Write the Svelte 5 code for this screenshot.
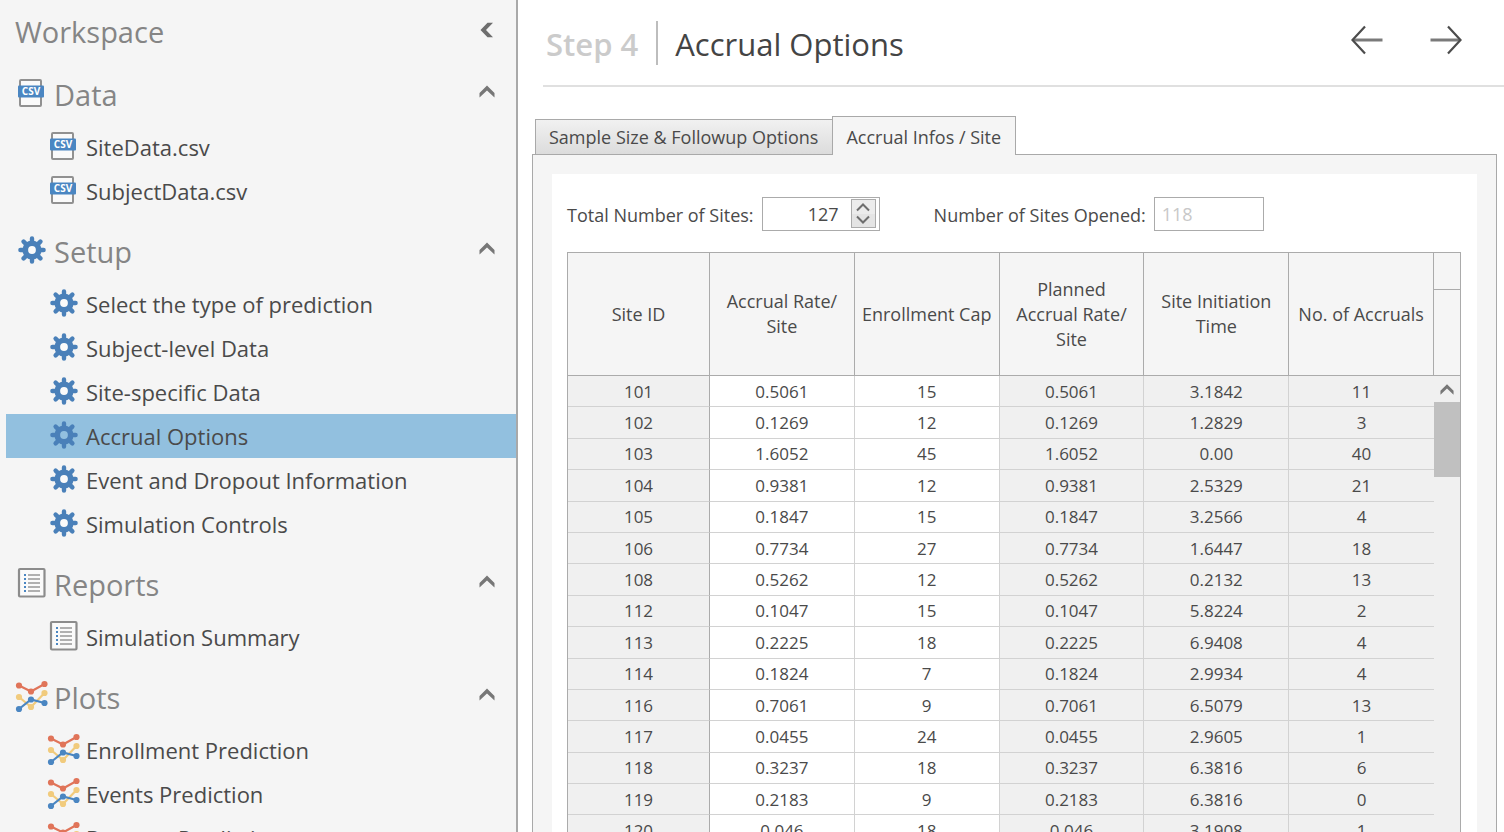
<script>
  const sections = [
    { title: 'Data', icon: 'csv', items: ['SiteData.csv', 'SubjectData.csv'] },
    {
      title: 'Setup',
      icon: 'gear',
      items: [
        'Select the type of prediction',
        'Subject-level Data',
        'Site-specific Data',
        'Accrual Options',
        'Event and Dropout Information',
        'Simulation Controls'
      ]
    },
    { title: 'Reports', icon: 'report', items: ['Simulation Summary'] },
    {
      title: 'Plots',
      icon: 'plot',
      items: ['Enrollment Prediction', 'Events Prediction', 'Dropout Prediction']
    }
  ];

  const columns = [
    'Site ID',
    'Accrual Rate/ Site',
    'Enrollment Cap',
    'Planned Accrual Rate/ Site',
    'Site Initiation Time',
    'No. of Accruals'
  ];

  const rows = [
    ['101', '0.5061', '15', '0.5061', '3.1842', '11'],
    ['102', '0.1269', '12', '0.1269', '1.2829', '3'],
    ['103', '1.6052', '45', '1.6052', '0.00', '40'],
    ['104', '0.9381', '12', '0.9381', '2.5329', '21'],
    ['105', '0.1847', '15', '0.1847', '3.2566', '4'],
    ['106', '0.7734', '27', '0.7734', '1.6447', '18'],
    ['108', '0.5262', '12', '0.5262', '0.2132', '13'],
    ['112', '0.1047', '15', '0.1047', '5.8224', '2'],
    ['113', '0.2225', '18', '0.2225', '6.9408', '4'],
    ['114', '0.1824', '7', '0.1824', '2.9934', '4'],
    ['116', '0.7061', '9', '0.7061', '6.5079', '13'],
    ['117', '0.0455', '24', '0.0455', '2.9605', '1'],
    ['118', '0.3237', '18', '0.3237', '6.3816', '6'],
    ['119', '0.2183', '9', '0.2183', '6.3816', '0'],
    ['120', '0.046', '18', '0.046', '3.1908', '1']
  ];

  let selected = $state('Accrual Options');
  let tab = $state(1);
  let totalSites = $state(127);
</script>

{#snippet icon(name)}
  {#if name === 'csv'}
    <svg class="icon" viewBox="0 0 32 32" aria-hidden="true">
      <rect x="4" y="3" width="21" height="26" rx="1" fill="#fafafa" stroke="#919191" stroke-width="2" />
      <rect x="2" y="8.5" width="26" height="12" rx="1" fill="#4a86c2" />
      <text x="15" y="18" text-anchor="middle" class="csv">CSV</text>
    </svg>
  {:else if name === 'gear'}
    <svg class="icon" viewBox="0 0 32 32" aria-hidden="true">
      <g stroke="#4a80b9" stroke-width="4.4" stroke-linecap="round">
        <path d="M16 4.4V27.6M4.4 16H27.6M7.6 7.6L24.4 24.4M24.4 7.6L7.6 24.4" />
      </g>
      <circle cx="16" cy="16" r="9.6" fill="#4a80b9" />
      <circle class="hole" cx="16" cy="16" r="3.9" />
    </svg>
  {:else if name === 'report'}
    <svg class="icon" viewBox="0 0 32 32" aria-hidden="true">
      <rect x="3" y="2" width="25.5" height="27.5" rx="1" fill="#fafafa" stroke="#8c8c8c" stroke-width="2.2" />
      <path d="M12 8H24M12 12H24M12 16H24M12 20H24M12 24H24" stroke="#b0b0b0" stroke-width="1.8" />
      <path d="M8 8h2M8 12h2M8 16h2M8 20h2M8 24h2" stroke="#4a86c2" stroke-width="2" />
    </svg>
  {:else}
    <svg class="icon" viewBox="0 0 32 32" aria-hidden="true">
      <g fill="none" stroke-width="2.2">
        <path d="M3 17L15 27L28.5 13" stroke="#f1cb7d" />
        <path d="M3 5.5L15 11.5L28.5 4" stroke="#e07459" />
        <path d="M3 29L15 19.5L28.5 23" stroke="#4a86c2" />
      </g>
      <g fill="#f1cb7d"><circle cx="3" cy="17" r="3.1" /><circle cx="15" cy="27" r="3.1" /><circle cx="28.5" cy="13" r="3.1" /></g>
      <g fill="#e07459"><circle cx="3" cy="5.5" r="3.1" /><circle cx="15" cy="11.5" r="3.1" /><circle cx="28.5" cy="4" r="3.1" /></g>
      <g fill="#4a86c2"><circle cx="3" cy="29" r="3.1" /><circle cx="15" cy="19.5" r="3.1" /><circle cx="28.5" cy="23" r="3.1" /></g>
    </svg>
  {/if}
{/snippet}

{#snippet chevronUp()}
  <svg class="chevron" viewBox="0 0 16 16" aria-hidden="true">
    <path d="M.5 10L8 2.5L15.500 10V14.500L8 7.500L.5 14.500z" fill="#777" />
  </svg>
{/snippet}

<div class="app">
  <aside class="sidebar">
    <header class="workspace">
      <h1>Workspace</h1>
      <button class="plain" aria-label="Collapse workspace">
        <svg class="chevron" viewBox="0 0 16 16" aria-hidden="true">
          <path d="M8.500 .8H14L7 8L14 15.200H8.500L1.500 8z" fill="#6e6e6e" />
        </svg>
      </button>
    </header>
    <nav>
      {#each sections as section}
        <section>
          <div class="heading">
            {@render icon(section.icon)}
            <h2>{section.title}</h2>
            <button class="plain" aria-label="Collapse {section.title}">{@render chevronUp()}</button>
          </div>
          <ul>
            {#each section.items as item}
              <li>
                <button class="item" class:selected={selected === item} onclick={() => (selected = item)}>
                  {@render icon(section.icon)}
                  <span>{item}</span>
                </button>
              </li>
            {/each}
          </ul>
        </section>
      {/each}
    </nav>
  </aside>

  <main>
    <header class="page-head">
      <span class="step">Step 4</span>
      <h2 class="title">Accrual Options</h2>
      <div class="arrows">
        <button class="plain" aria-label="Previous step">
          <svg class="arrow" viewBox="0 0 32 30" aria-hidden="true">
            <path d="M31.500 15H2" stroke="#7a7a7a" stroke-width="3" />
            <path d="M14 1.500L1.500 15L14 28.500" fill="none" stroke="#4c4c4c" stroke-width="2.2" />
          </svg>
        </button>
        <button class="plain" aria-label="Next step">
          <svg class="arrow" viewBox="0 0 32 30" aria-hidden="true">
            <path d="M.5 15H30" stroke="#7a7a7a" stroke-width="3" />
            <path d="M18 1.500L30.500 15L18 28.500" fill="none" stroke="#4c4c4c" stroke-width="2.2" />
          </svg>
        </button>
      </div>
    </header>

    <div class="tabs" role="tablist">
      <button role="tab" aria-selected={tab === 0} class:active={tab === 0} onclick={() => (tab = 0)}>
        Sample Size &amp; Followup Options
      </button>
      <button role="tab" aria-selected={tab === 1} class:active={tab === 1} onclick={() => (tab = 1)}>
        Accrual Infos / Site
      </button>
    </div>

    <div class="panel">
      <div class="sheet">
        <div class="fields">
          <label for="total">Total Number of Sites:</label>
          <div class="spinner">
            <input id="total" type="number" bind:value={totalSites} />
            <div class="steps">
              <button aria-label="Increase" onclick={() => (totalSites += 1)}>
                <svg viewBox="0 0 16 10" aria-hidden="true"><path d="M2 8.500L8 2.500L14 8.500" /></svg>
              </button>
              <button aria-label="Decrease" onclick={() => (totalSites -= 1)}>
                <svg viewBox="0 0 16 10" aria-hidden="true"><path d="M2 1.500L8 7.500L14 1.500" /></svg>
              </button>
            </div>
          </div>
          <label for="opened" class="second">Number of Sites Opened:</label>
          <input id="opened" class="opened" type="text" value="118" disabled />
        </div>

        <div class="grid">
          <table>
            <colgroup>
              <col class="id" />
              <col span="5" />
            </colgroup>
            <thead>
              <tr>
                {#each columns as column}
                  <th scope="col">{column}</th>
                {/each}
              </tr>
            </thead>
            <tbody>
              {#each rows as row}
                <tr>
                  {#each row as cell, i}
                    <td class:editable={i === 1 || i === 2}>{cell}</td>
                  {/each}
                </tr>
              {/each}
            </tbody>
          </table>
          <div class="rail">
            <div class="corner"></div>
            <button class="up" aria-label="Scroll up">{@render chevronUp()}</button>
            <div class="thumb"></div>
          </div>
        </div>
      </div>
    </div>
  </main>
</div>

<style>
  :global(body) {
    margin: 0;
    background: #fff;
  }
  .app {
    display: flex;
    height: 100vh;
    overflow: hidden;
    font-family: 'Open Sans', 'Noto Sans', sans-serif;
    font-size: 18px;
    color: #4a4a4a;
  }
  h1,
  h2,
  ul {
    margin: 0;
    padding: 0;
    font-weight: 400;
    list-style: none;
  }
  button,
  input {
    font: inherit;
    color: inherit;
    box-sizing: border-box;
  }
  button {
    margin: 0;
    padding: 0;
    border: 0;
    background: none;
    cursor: pointer;
  }
  svg {
    display: block;
  }
  .plain {
    display: flex;
  }

  .sidebar {
    flex: none;
    width: 516px;
    border-right: 2px solid #a9a9a9;
    background: #f5f5f5;
    overflow: hidden;
  }
  .workspace {
    display: flex;
    align-items: center;
    justify-content: space-between;
    height: 60px;
    padding: 0 21px 0 15px;
    box-sizing: border-box;
    margin-bottom: 15px;
  }
  h1,
  h2 {
    font-size: 29px;
    line-height: 40px;
    color: #858585;
  }
  h1 {
    margin-top: 4px;
  }
  section {
    margin-bottom: 19px;
  }
  .heading {
    display: flex;
    align-items: center;
    gap: 6px;
    height: 40px;
    padding: 0 21px 0 16px;
    margin-bottom: 10px;
  }
  .heading .icon {
    margin-bottom: 5px;
  }
  .heading h2 {
    flex: 1;
  }
  .icon {
    flex: none;
    width: 32px;
    height: 32px;
    overflow: visible;
  }
  .csv {
    font-size: 10px;
    font-weight: 700;
    fill: #fff;
  }
  .hole {
    fill: #fafafa;
  }
  .selected .hole {
    fill: #92c0df;
  }
  .chevron {
    width: 16px;
    height: 16px;
  }
  .heading .chevron {
    margin-bottom: 8px;
  }
  .item {
    display: flex;
    align-items: center;
    gap: 6px;
    width: calc(100% - 6px);
    height: 44px;
    margin-left: 6px;
    padding-left: 42px;
    font-size: 22px;
    text-align: left;
    white-space: nowrap;
  }
  .item .icon {
    margin-bottom: 2px;
  }
  .item.selected {
    background: #92c0df;
  }

  main {
    flex: 1;
    min-width: 0;
    display: flex;
    flex-direction: column;
  }
  .page-head {
    display: flex;
    align-items: center;
    flex: none;
    height: 85px;
    margin-left: 25px;
    padding: 0 42px 0 3px;
    border-bottom: 2px solid #e0e0e0;
  }
  .step {
    padding-right: 18px;
    border-right: 2px solid #bdbdbd;
    font-size: 31px;
    font-weight: 600;
    line-height: 42px;
    color: #cbcbcb;
  }
  .title {
    flex: 1;
    margin-left: 17px;
    font-size: 31px;
    line-height: 42px;
    color: #444;
  }
  .step,
  .title {
    padding-top: 2px;
  }
  .arrows {
    display: flex;
    gap: 47px;
    margin-bottom: 6px;
  }
  .arrow {
    width: 32px;
    height: 30px;
  }

  .tabs {
    display: flex;
    align-items: flex-end;
    flex: none;
    height: 39px;
    margin: 29px 0 -1px 17px;
    position: relative;
  }
  .tabs button {
    height: 36px;
    padding: 0 14px 0 13px;
    border: 1px solid #a9a9a9;
    background: linear-gradient(#f1f1f1, #dcdcdc);
    white-space: nowrap;
  }
  .tabs button:first-child {
    border-right: 0;
  }
  .tabs button.active {
    height: 39px;
    padding-top: 2px;
    border-bottom: 0;
    background: #f5f5f5;
  }
  .panel {
    flex: 1;
    min-height: 0;
    margin: 0 7px 0 14px;
    padding: 19px 19px 0;
    border: 1px solid #a9a9a9;
    border-bottom: 0;
    background: #f5f5f5;
    overflow: hidden;
  }
  .sheet {
    padding: 22px 16px 0 15px;
    background: #fff;
  }
  .fields {
    display: flex;
    align-items: center;
    height: 35px;
    margin-bottom: 21px;
    white-space: nowrap;
  }
  .fields label {
    padding-top: 2px;
  }
  .spinner {
    display: flex;
    align-items: center;
    width: 118px;
    height: 34px;
    box-sizing: border-box;
    margin-left: 8px;
    padding-right: 3px;
    border: 1px solid #ababab;
  }
  .spinner input {
    flex: 1;
    min-width: 0;
    padding: 0 12px 0 0;
    border: 0;
    outline: 0;
    background: none;
    text-align: right;
    appearance: textfield;
  }
  .spinner input::-webkit-inner-spin-button {
    display: none;
  }
  .steps {
    width: 25px;
    height: 29px;
    box-sizing: border-box;
    border: 1px solid #ababab;
    background: #ececec;
  }
  .steps button {
    display: flex;
    align-items: center;
    justify-content: center;
    width: 100%;
    height: 50%;
  }
  .steps button + button {
    background: #e4e4e4;
  }
  .steps svg {
    width: 16px;
    height: 10px;
    fill: none;
    stroke: #6e6e6e;
    stroke-width: 2;
  }
  .second {
    margin-left: 54px;
  }
  .opened {
    width: 110px;
    height: 34px;
    margin-left: 8px;
    padding: 0 7px;
    border: 1px solid #ababab;
    background: #fff;
    color: #c8c8c8;
  }

  .grid {
    display: flex;
    border: 1px solid #ababab;
    background: #f0f0f0;
  }
  table {
    flex: 1;
    width: 100%;
    min-width: 0;
    table-layout: fixed;
    border-collapse: separate;
    border-spacing: 0;
    height: 594px;
  }
  .id {
    width: 142px;
  }
  th,
  td {
    padding: 0;
    text-align: center;
    font-weight: 400;
    line-height: 25px;
  }
  th {
    height: 123px;
    padding: 0 6px;
    border-right: 1px solid #ababab;
    border-bottom: 1px solid #ababab;
    background: #f5f5f5;
    box-sizing: border-box;
  }
  td {
    border-right: 1px solid #d2d2d2;
    border-bottom: 1px solid #d2d2d2;
    background: #f0f0f0;
    font-size: 17px;
  }
  td.editable {
    background: #fff;
  }
  td:first-child {
    border-right-color: #ababab;
  }
  td:last-child {
    border-right: 0;
  }
  .rail {
    flex: none;
    width: 26px;
  }
  .corner {
    height: 86px;
    padding-top: 36px;
    border-bottom: 1px solid #ababab;
    background: linear-gradient(#ababab, #ababab) 0 36px / 100% 1px no-repeat #f5f5f5;
  }
  .up {
    display: flex;
    align-items: center;
    justify-content: center;
    width: 100%;
    height: 26px;
  }
  .up .chevron {
    width: 14px;
    height: 14px;
  }
  .thumb {
    height: 75px;
    background: #c0c0c0;
  }
</style>
